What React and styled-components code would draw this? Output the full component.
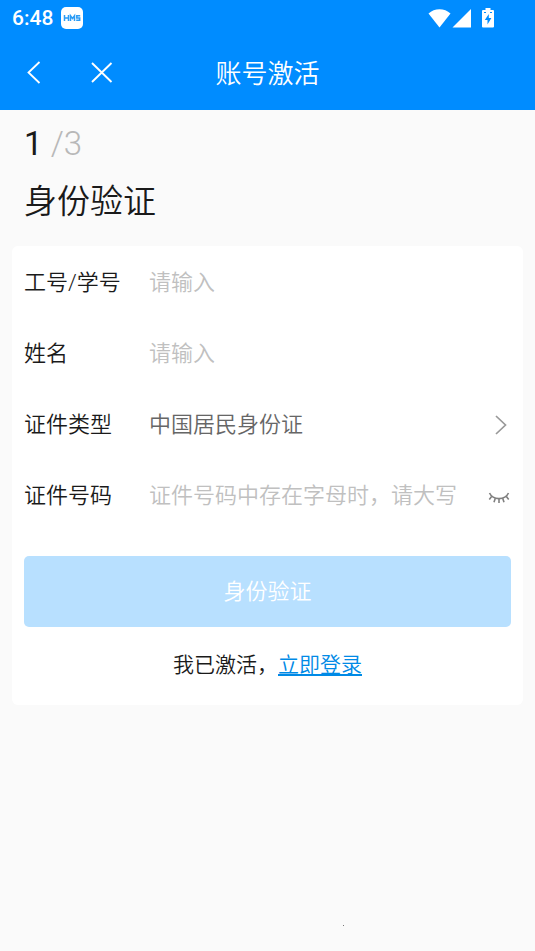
import { useState } from "react";
import styled, { createGlobalStyle } from "styled-components";

const GlobalStyle = createGlobalStyle`
  * {
    box-sizing: border-box;
  }

  body {
    margin: 0;
    background: #fafafa;
    color: #1a1a1a;
    font-family: Roboto, "Noto Sans CJK SC", sans-serif;
    font-weight: 350;
  }

  button,
  input,
  select {
    font-family: inherit;
    font-weight: inherit;
  }
`;

const Page = styled.div`
  display: flex;
  flex-direction: column;
  min-height: 100vh;
`;

const Header = styled.header`
  background: #008cff;
  color: #fff;
`;

const StatusBar = styled.div`
  display: flex;
  align-items: center;
  height: 36px;
  padding: 0 41px 0 12px;

  > time {
    font-size: 21px;
    line-height: 36px;
    font-weight: 500;
    margin-right: 8px;
  }
`;

const StatusIcons = styled.div`
  display: flex;
  align-items: center;
  margin-left: auto;
`;

const BatterySlot = styled.span`
  display: flex;
  margin-left: 11px;
`;

const NavBar = styled.div`
  display: grid;
  grid-template-columns: 1fr auto 1fr;
  align-items: center;
  height: 74px;
  padding: 0 16px;

  > h1 {
    margin: 0;
    padding-top: 2px;
    font-size: 26px;
    line-height: 40px;
    font-weight: 350;
  }
`;

const NavButtons = styled.div`
  display: flex;
  gap: 32px;
`;

const IconButton = styled.button`
  display: flex;
  align-items: center;
  justify-content: center;
  width: 36px;
  height: 36px;
  padding: 0;
  border: 0;
  background: none;
  color: inherit;
`;

const Intro = styled.section`
  padding: 12px 24px 16px;

  > h2 {
    margin: 8px 0 0;
    font-size: 33px;
    line-height: 56px;
    font-weight: 350;
  }
`;

const Step = styled.p`
  margin: 0;
  font-size: 33px;
  line-height: 44px;
  font-weight: 400;

  > span {
    color: #b8b8b8;
    font-weight: 300;
  }
`;

const Card = styled.form`
  margin: 0 12px;
  padding: 1px 12px 24px;
  border-radius: 6px;
  background: #fff;
`;

const Row = styled.div`
  display: flex;
  align-items: center;
  height: 71px;
  font-size: 22px;

  > label {
    flex: none;
    width: 125px;
    line-height: 32px;
  }
`;

const Input = styled.input`
  flex: 1;
  min-width: 0;
  height: 48px;
  padding: 0;
  border: 0;
  outline: 0;
  background: none;
  color: #666;
  font-size: 22px;

  &::placeholder {
    color: #c0c0c0;
    opacity: 1;
  }
`;

const Select = styled.select`
  flex: 1;
  min-width: 0;
  height: 48px;
  padding: 0;
  border: 0;
  outline: 0;
  appearance: none;
  background: none;
  color: #666;
  font-size: 22px;
`;

const RowIcon = styled.span`
  display: flex;
  flex: none;
  color: #999;
`;

const EyeButton = styled(IconButton)`
  flex: none;
  width: 24px;
  color: #808080;
  margin-left: 12px;
`;

const Submit = styled.button`
  display: block;
  width: 100%;
  height: 71px;
  margin-top: 25px;
  padding: 0 0 5px;
  border: 0;
  border-radius: 5px;
  background: #b8e0ff;
  color: #fff;
  font-size: 22px;
`;

const LoginTip = styled.p`
  margin: 22px 0 0;
  font-size: 21px;
  line-height: 32px;
  text-align: center;

  > a {
    color: #008ae6;
    text-decoration: underline;
    text-decoration-thickness: 2px;
    text-underline-offset: 2px;
  }
`;

const Footer = styled.footer`
  display: flex;
  justify-content: center;
  margin-top: auto;
  padding: 0 0 25px 152px;
`;

const Dot = styled.span`
  width: 1px;
  height: 1px;
  background: #777;
`;

const HmsBadge = () => (
  <svg width="22" height="22" viewBox="0 0 22 22" aria-label="HMS">
    <rect width="22" height="22" rx="5" fill="#fff" />
    <g fill="none" stroke="#2b9cf5" strokeWidth="1.5">
      <path d="M3.500 8v6M7.500 8v6M3.500 11h4" />
      <path d="M9.500 14V8.800l2 2.600 2-2.600V14" />
      <path d="M19.200 8.700h-3.400v2.300h2.900v2.300h-3.500" />
    </g>
  </svg>
);

const WifiIcon = () => (
  <svg width="24" height="19" viewBox="0 0 24 19" fill="#fff">
    <path d="M0.500 4.500C6.500-1.200 16.500-1.200 22.500 4.500L11.500 18.500Z" />
  </svg>
);

const SignalIcon = () => (
  <svg width="19" height="19" viewBox="0 0 19 19" fill="#fff">
    <path d="M19 0v18.500H0.500Z" />
  </svg>
);

const BatteryIcon = () => (
  <svg width="12" height="20" viewBox="0 0 12 20">
    <path
      d="M3.500 0h5v2H11a1 1 0 0 1 1 1v15.500a1 1 0 0 1-1 1H1a1 1 0 0 1-1-1V3a1 1 0 0 1 1-1h2.500z"
      fill="#fff"
    />
    <path d="M6.800 6L2.800 12h2.700v4.500L9.400 10H6.800z" fill="#008cff" />
    <path d="M2 4.500h2M8 4.500h2" stroke="#008cff" />
  </svg>
);

const BackIcon = () => (
  <svg width="36" height="36" viewBox="0 0 36 36" fill="none" stroke="currentColor" strokeWidth="1.8">
    <path d="M23.500 7L12.500 17.500l11 10.500" />
  </svg>
);

const CloseIcon = () => (
  <svg width="36" height="36" viewBox="0 0 36 36" fill="none" stroke="currentColor" strokeWidth="1.9">
    <path d="M8 8l19.500 19M27.500 8L8 27" />
  </svg>
);

const ArrowIcon = () => (
  <svg width="16" height="20" viewBox="0 0 16 20" fill="none" stroke="currentColor" strokeWidth="1.7">
    <path d="M1 1l9.500 9L1 19" />
  </svg>
);

const ClosedEyeIcon = () => (
  <svg width="24" height="24" viewBox="0 0 24 24" fill="none" stroke="currentColor" strokeWidth="1.6">
    <path d="M2.500 9c3.500 7.500 15.500 7.500 19 0" />
    <path d="M4.800 12.200l-2.500 3.200M8.300 14.200l-1.300 4M12 14.700v4.300M15.700 14.200l1.300 4M19.200 12.200l2.500 3.200" />
  </svg>
);

const StatusHeader = () => (
  <StatusBar>
    <time>6:48</time>
    <HmsBadge />
    <StatusIcons>
      <WifiIcon />
      <SignalIcon />
      <BatterySlot>
        <BatteryIcon />
      </BatterySlot>
    </StatusIcons>
  </StatusBar>
);

const App = () => {
  const [visible, setVisible] = useState(false);

  return (
    <>
      <GlobalStyle />
      <Page>
        <Header>
          <StatusHeader />
          <NavBar>
            <NavButtons>
              <IconButton type="button" aria-label="返回">
                <BackIcon />
              </IconButton>
              <IconButton type="button" aria-label="关闭">
                <CloseIcon />
              </IconButton>
            </NavButtons>
            <h1>账号激活</h1>
          </NavBar>
        </Header>
        <main>
          <Intro>
            <Step>
              1 <span>/3</span>
            </Step>
            <h2>身份验证</h2>
          </Intro>
          <Card>
            <Row>
              <label htmlFor="account">工号/学号</label>
              <Input id="account" placeholder="请输入" />
            </Row>
            <Row>
              <label htmlFor="name">姓名</label>
              <Input id="name" placeholder="请输入" />
            </Row>
            <Row>
              <label htmlFor="cardType">证件类型</label>
              <Select id="cardType">
                <option>中国居民身份证</option>
              </Select>
              <RowIcon>
                <ArrowIcon />
              </RowIcon>
            </Row>
            <Row>
              <label htmlFor="cardNo">证件号码</label>
              <Input
                id="cardNo"
                type={visible ? "text" : "password"}
                placeholder="证件号码中存在字母时，请大写"
              />
              <EyeButton
                type="button"
                aria-label="显示证件号码"
                onClick={() => setVisible(!visible)}
              >
                <ClosedEyeIcon />
              </EyeButton>
            </Row>
            <Submit type="button">身份验证</Submit>
            <LoginTip>
              我已激活，<a href="#login">立即登录</a>
            </LoginTip>
          </Card>
        </main>
        <Footer>
          <Dot />
        </Footer>
      </Page>
    </>
  );
};

export default App;
